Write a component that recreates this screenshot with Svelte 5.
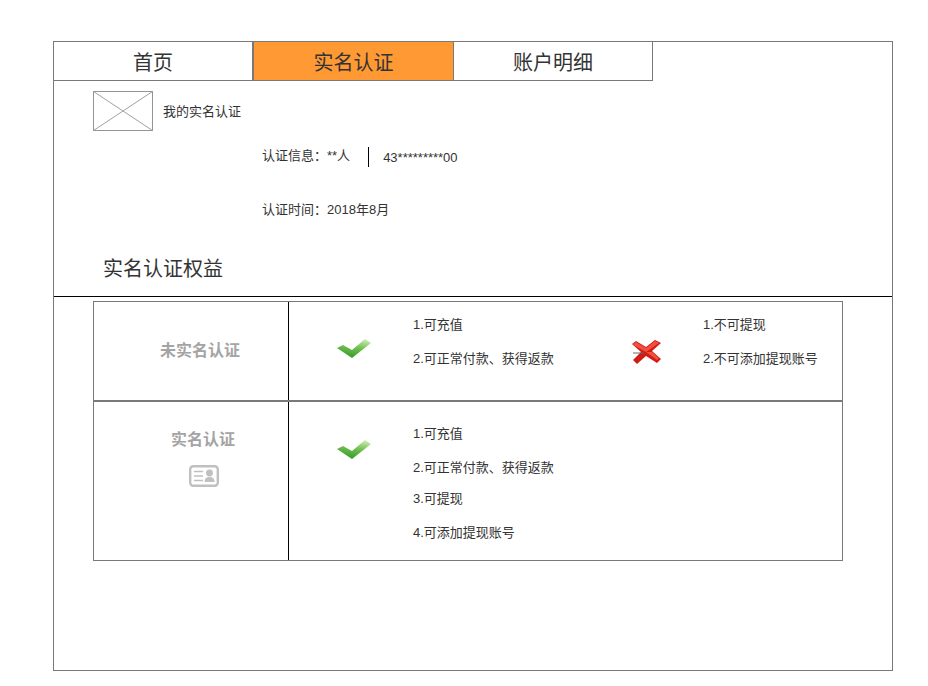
<script>
  const tabs = [
    { label: '首页' },
    { label: '实名认证', active: true },
    { label: '账户明细' }
  ];
</script>

{#snippet check()}
  <svg class="mark" width="36" height="24" viewBox="0 0 36 24">
    <defs>
      <linearGradient id="chk" x1="0.8" y1="0" x2="0.45" y2="1">
        <stop offset="0" stop-color="#d2ecb8" />
        <stop offset="0.45" stop-color="#74c254" />
        <stop offset="1" stop-color="#389a28" />
      </linearGradient>
    </defs>
    <path d="M0 10 L6 7 L15 12 L28 1 L34 5 L15 20 Z" fill="url(#chk)" />
  </svg>
{/snippet}

<div class="page">
  <div class="frame">
    <nav class="tabs">
      {#each tabs as t}
        <div class="tab" class:active={t.active}>{t.label}</div>
      {/each}
    </nav>

    <div class="me">
      <svg class="ph" width="60" height="40" viewBox="0 0 60 40">
        <rect x="0.5" y="0.5" width="59" height="39" fill="#fff" stroke="#949494" />
        <path d="M0.5 0.5 L59.5 39.5 M59.5 0.5 L0.5 39.5" stroke="#a0a0a0" fill="none" />
      </svg>
      <span class="title">我的实名认证</span>
    </div>

    <div class="info">
      <div class="row">
        <span class="who">认证信息：**人</span>
        <i class="sep"></i>
        <span class="id">43*********00</span>
      </div>
      <div class="time">认证时间：2018年8月</div>
    </div>

    <h2>实名认证权益</h2>
    <div class="rule"></div>

    <div class="table">
      <div class="line first">
        <div class="head"><b>未实名认证</b></div>
        <div class="body">
          <div class="mark-col">{@render check()}</div>
          <div class="list a">
            <p>1.可充值</p>
            <p>2.可正常付款、获得返款</p>
          </div>
          <div class="cross">
            <svg width="30" height="25" viewBox="0 0 30 25">
              <path d="M0 4 L4 1 L14 7 L23 0 L29 3 L20 11 L29 19 L25 23 L14 16 L5 24 L1 20 L9 12 Z" fill="#cf1d16" />
              <path d="M1 4 L4 2 L14 8 L23 1 L27 3 L14 12 L3 6 Z M14 12 L20 12 L27 18 L25 20 Z" fill="#f2503e" />
              <path d="M1 13 L12 13" stroke="#667" />
            </svg>
          </div>
          <div class="list">
            <p>1.不可提现</p>
            <p>2.不可添加提现账号</p>
          </div>
        </div>
      </div>
      <div class="line second">
        <div class="head column">
          <b>实名认证</b>
          <svg class="card" width="30" height="22" viewBox="0 0 30 22">
            <rect x="1.2" y="1.2" width="27.600" height="19.600" rx="3" fill="#fff" stroke="#c0c0c0" stroke-width="2.400" />
            <path d="M5 6.500h9M5 11h9M5 15.500h9" stroke="#c0c0c0" stroke-width="1.500" />
            <circle cx="20.500" cy="8" r="3.400" fill="#c0c0c0" />
            <path d="M15.500 17 q0-5 5-5 q5 0 5 5 Z" fill="#c0c0c0" />
          </svg>
        </div>
        <div class="body">
          <div class="mark-col">{@render check()}</div>
          <div class="list b">
            <p>1.可充值</p>
            <p>2.可正常付款、获得返款</p>
            <p>3.可提现</p>
            <p>4.可添加提现账号</p>
          </div>
        </div>
      </div>
    </div>
  </div>
</div>

<style>
  :global(body) { margin: 0; background: #fff; }
  .page {
    padding: 41px 0 0 53px;
    color: #333;
    font: 13px/16px "Liberation Sans", "Noto Sans CJK SC", sans-serif;
  }
  .frame { width: 840px; height: 630px; box-sizing: border-box; border: 1px solid #797979; }
  .tabs { display: flex; width: 599px; height: 38px; border-bottom: 1px solid #797979; }
  .tab {
    width: 199px;
    box-sizing: border-box;
    border-right: 1px solid #797979;
    padding-top: 4px;
    text-align: center;
    font-size: 20px;
    line-height: 35px;
  }
  .tab.active { width: 201px; background: #f93; border-left: 1px solid #797979; }
  .me { display: flex; align-items: center; gap: 10px; margin: 10px 0 0 39px; height: 40px; }
  .ph { display: block; }
  .title { padding-top: 2px; }
  .info { margin: 16px 0 0 208px; }
  .row { display: flex; align-items: center; height: 20px; }
  .who { padding-bottom: 3px; }
  .sep { width: 1px; height: 20px; background: #000; margin: 0 14px 0 18px; }
  .id { padding-top: 2px; }
  .time { margin-top: 35px; }
  h2 { margin: 37px 0 0 49px; font-size: 20px; font-weight: 400; line-height: 28px; }
  .rule { height: 1px; background: #000; margin-top: 13px; }
  .table { margin: 4px 0 0 39px; width: 750px; height: 260px; box-sizing: border-box; border: 1px solid #797979; }
  .line { display: flex; }
  .first { height: 98px; border-bottom: 2px solid #797979; }
  .second { height: 158px; }
  .head {
    width: 195px;
    flex: none;
    box-sizing: border-box;
    border-right: 1px solid #000;
    color: #a4a4a4;
    font-size: 16px;
    display: flex;
    align-items: center;
    justify-content: center;
    padding: 0 0 1px 18px;
  }
  .head.column { flex-direction: column; justify-content: flex-start; padding: 30px 0 0 24px; gap: 17px; }
  .card { display: block; margin-left: 2px; }
  .body { display: flex; flex: 1; }
  .mark-col { width: 124px; flex: none; box-sizing: border-box; display: flex; justify-content: center; padding: 36px 0 0 7px; }
  .second .mark-col { padding-top: 37px; }
  .mark { display: block; }
  .cross { width: 71px; margin-left: 4px; padding-top: 38px; }
  .list { padding-top: 15px; }
  .list.a { width: 215px; }
  .list.b { padding-top: 24px; }
  .list p { margin: 0 0 18px; }
  .list.b p:nth-child(2) { margin-bottom: 15px; }
</style>
